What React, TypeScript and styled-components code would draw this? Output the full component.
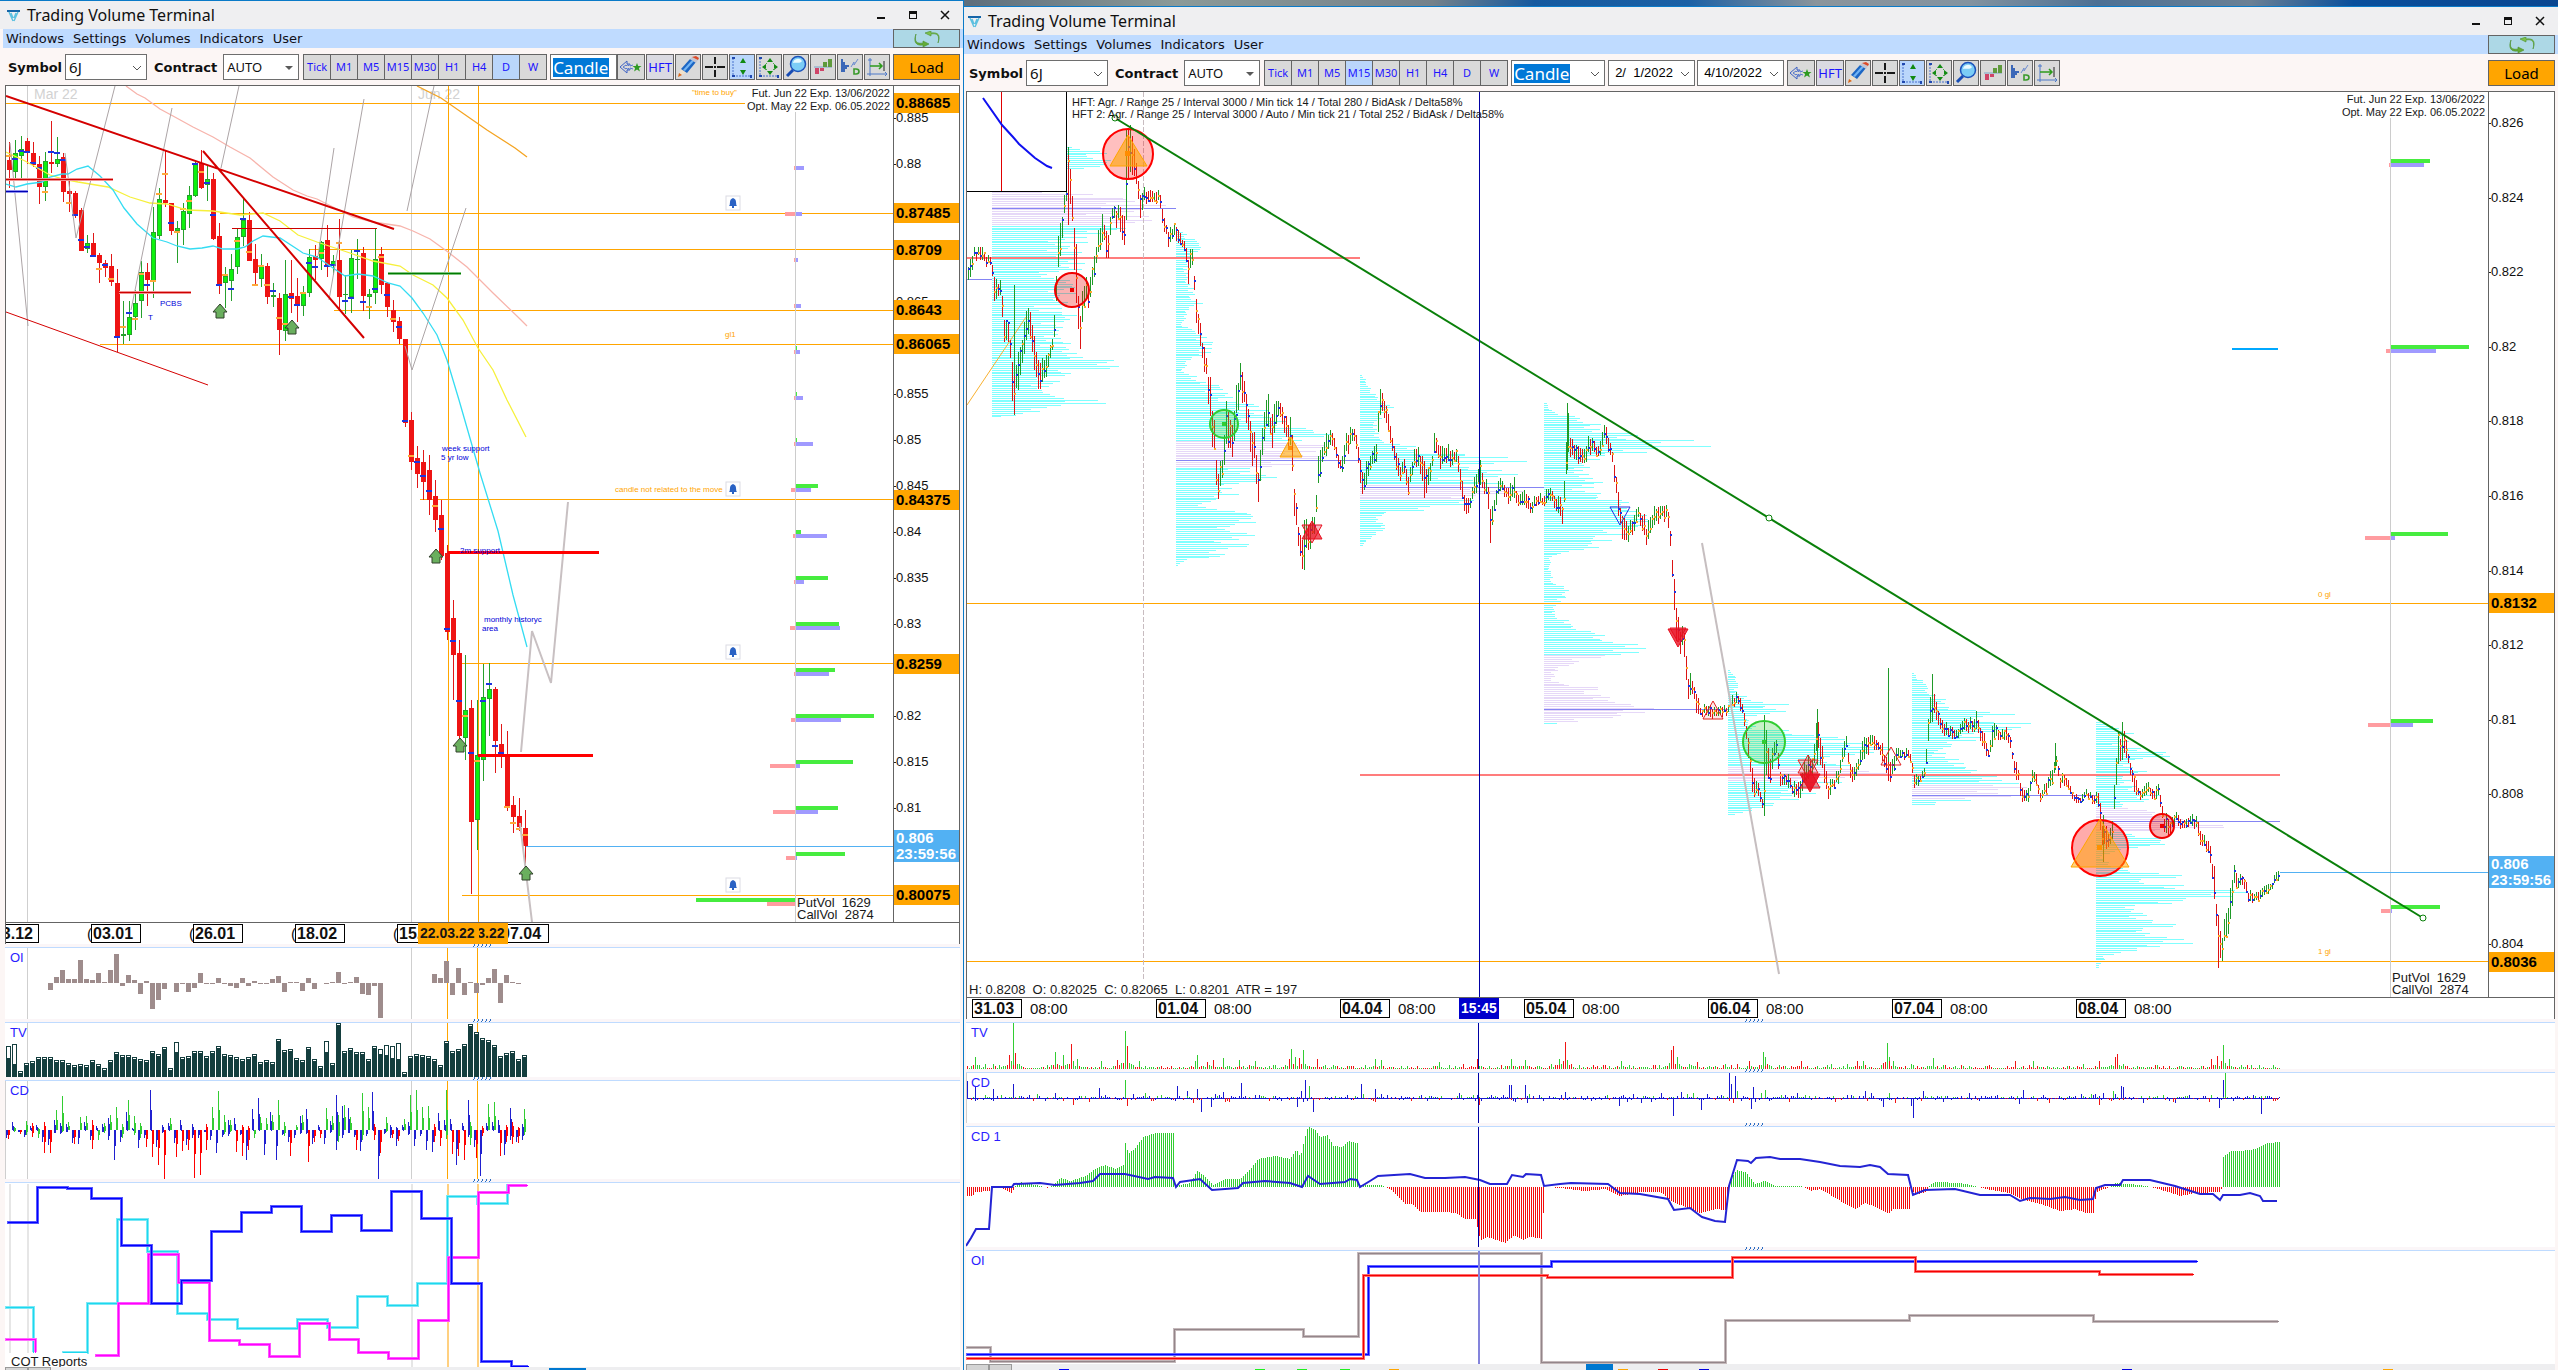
import React from "react";
import styled, { createGlobalStyle } from "styled-components";

const SANS = `"Noto Sans", "Open Sans", sans-serif`;
const WIDE = `"DejaVu Sans", Verdana, sans-serif`;
const CHART = `"Liberation Sans", Arial, sans-serif`;

const BLUE = "#0a7ac8";
const FRAME = "#646464";
const ORANGE = "#ffa500";

/* ------------------------------------------------------------------ */
/* helpers                                                             */
/* ------------------------------------------------------------------ */

type Pt = [number, number];
type Key3 = [number, number, number];

const box = (x: number, y: number, w: number, h: number) =>
  `M${x} ${y}h${w}v${h}h${-w}z`;

function makeRandom(seed: number) {
  let s = seed >>> 0;
  return () => {
    s = (s + 0x6d2b79f5) >>> 0;
    let t = s;
    t = Math.imul(t ^ (t >>> 15), t | 1);
    t ^= t + Math.imul(t ^ (t >>> 7), t | 61);
    return ((t ^ (t >>> 14)) >>> 0) / 4294967296;
  };
}

function lerp(keys: number[][], x: number, col = 1): number {
  if (x <= keys[0][0]) return keys[0][col];
  for (let i = 1; i < keys.length; i++) {
    const a = keys[i - 1];
    const b = keys[i];
    if (x <= b[0]) {
      const span = b[0] - a[0] || 1;
      return a[col] + ((b[col] - a[col]) * (x - a[0])) / span;
    }
  }
  return keys[keys.length - 1][col];
}

const poly = (pts: Pt[]) => pts.map((p) => p.join(",")).join(" ");

/** Step line: [x, y] marks the level that starts at x. */
function stepPath(pts: Pt[], end: number) {
  let d = `M${pts[0][0]} ${pts[0][1]}`;
  pts.slice(1).forEach(([x, y]) => {
    d += `H${x}V${y}`;
  });
  return d + `H${end}`;
}

/* ------------------------------------------------------------------ */
/* styled parts                                                        */
/* ------------------------------------------------------------------ */

const Global = createGlobalStyle`
  * { box-sizing: border-box; }
  body { margin: 0; font-family: ${SANS}; background: #0a4f9c; color: #101010; }
  button, input, select { font: inherit; margin: 0; }
`;

const Desktop = styled.main`
  display: grid;
  grid-template-columns: 964fr 1594fr;
  height: 100vh;
  min-height: 600px;
  overflow: hidden;
  background: linear-gradient(90deg, #5f6f7c 38%, #8c9a98 46%, #75818a 56%, #15599f 60%, #1b60a5 66%, #8b949b 71%, #8393a0 77%, #4d7094 82%, #6b8094 88%, #0a4f9c 92%, #0a4690 100%);
`;

const Frame = styled.section<{ $inset?: boolean }>`
  display: flex;
  flex-direction: column;
  min-width: 0;
  min-height: 0;
  margin-top: ${(p) => (p.$inset ? 6 : 0)}px;
  border-top: 1px solid ${BLUE};
  border-right: ${(p) => (p.$inset ? 0 : 1)}px solid ${BLUE};
  background: #fcf6f5;
`;

const TitleBar = styled.header<{ $inset?: boolean }>`
  display: flex;
  align-items: center;
  flex: 0 0 28px;
  padding: 0 2px 0 ${(p) => (p.$inset ? 3 : 6)}px;
  gap: 6px;
  background: #efeff1;
`;

const Title = styled.h1`
  margin: 0;
  flex: 1;
  font: 400 16px/24px ${SANS};
`;

const WinButtons = styled.div`
  display: flex;
`;

const WinButton = styled.button`
  display: grid;
  place-items: center;
  width: 32px;
  height: 24px;
  padding: 0;
  border: 0;
  background: transparent;
`;

const MenuBar = styled.nav<{ $inset?: boolean }>`
  display: flex;
  flex: 0 0 19px;
  align-items: stretch;
  margin-left: ${(p) => (p.$inset ? 0 : 3)}px;
  padding: 0 3px;
  gap: 9px;
  background: #bfdbff;
`;

const MenuItem = styled.button`
  padding: 0;
  border: 0;
  background: transparent;
  color: #101018;
  font: 400 13px/19px ${WIDE};
`;

const Refresh = styled.button`
  display: grid;
  place-items: center;
  width: 67px;
  margin-left: auto;
  padding: 0;
  border: 1px solid ${FRAME};
  background: #add8e6;
`;

const Toolbar = styled.div<{ $inset?: boolean }>`
  display: flex;
  flex: 0 0 37px;
  align-items: flex-start;
  padding: 6px 3px 0 ${(p) => (p.$inset ? 5 : 8)}px;
`;

const Group = styled.div<{ $gap?: number; $after?: number }>`
  display: flex;
  align-items: center;
  height: 26px;
  gap: ${(p) => p.$gap ?? 0}px;
  margin-right: ${(p) => p.$after ?? 0}px;
`;

const Caption = styled.label`
  font: 700 13px/26px ${WIDE};
  padding-top: 2px;
`;

const Combo = styled.span<{ $w: number }>`
  position: relative;
  display: flex;
  align-items: center;
  width: ${(p) => p.$w}px;
  height: 26px;
  border: 1px solid #6e6e6e;
  background: #fff;
`;

const Pick = styled.select<{ $size: number }>`
  appearance: none;
  width: 100%;
  height: 24px;
  padding: 0 0 0 3px;
  border: 0;
  background: transparent;
  color: #101010;
  font: 400 ${(p) => p.$size}px/22px ${SANS};
`;

const SelectedPick = styled.select`
  appearance: none;
  height: 19px;
  margin-left: 2px;
  padding: 0;
  border: 0;
  background: #0078d7;
  color: #fff;
  font: 400 17px/19px ${SANS};
`;

const DateBox = styled.input`
  width: 100%;
  height: 24px;
  padding: 0 0 0 6px;
  border: 0;
  background: transparent;
  font: 400 13px/24px ${CHART};
`;

const Arrow = styled.svg`
  position: absolute;
  right: 4px;
  top: 9px;
  pointer-events: none;
`;

const ToolButton = styled.button<{ $w?: number; $on?: boolean; $join?: boolean }>`
  display: grid;
  place-items: center;
  width: ${(p) => p.$w ?? 26}px;
  height: 26px;
  margin-left: ${(p) => (p.$join ? -1 : 0)}px;
  padding: 0;
  border: 1px solid ${FRAME};
  background: ${(p) => (p.$on ? "#bad6fb" : "#d9d9d9")};
  color: #1c14ff;
  font: 400 11px/24px ${SANS};
  white-space: nowrap;
`;

const HftButton = styled(ToolButton)`
  font-size: 13px;
  background: #dadae2;
`;

const Load = styled.button`
  width: 67px;
  height: 26px;
  margin-left: auto;
  padding: 0;
  border: 1px solid ${FRAME};
  background: ${ORANGE};
  font: 400 15px/24px ${SANS};
`;

const Body = styled.div<{ $inset?: boolean; $rows: string }>`
  display: grid;
  flex: 1;
  min-height: 0;
  margin: 0 3px 0 ${(p) => (p.$inset ? 2 : 5)}px;
  border-top: 1px solid ${FRAME};
  grid-template-columns: minmax(0, 1fr);
  grid-template-rows: ${(p) => p.$rows};
`;

const ChartRow = styled.div`
  display: grid;
  grid-template-columns: minmax(0, 1fr) 66px;
  min-height: 0;
  border: solid ${FRAME};
  border-width: 0 1px;
  background: #fff;
`;

const Plot = styled.svg`
  display: block;
  width: 100%;
  height: 100%;
  min-height: 0;
  background: #fff;
`;

const Axis = styled.div`
  position: relative;
  border-left: 1px solid ${FRAME};
  overflow: hidden;
  background: #fff;
`;

const Tick = styled.span`
  position: absolute;
  left: 0;
  transform: translateY(-50%);
  padding-left: 2px;
  font: 400 13px/16px ${CHART};
  &::before {
    content: "";
    position: absolute;
    left: 0;
    top: 8px;
    width: 2px;
    height: 1px;
    background: #222;
  }
`;

const Tag = styled.span<{ $live?: boolean }>`
  position: absolute;
  left: 0;
  right: 0;
  transform: translateY(-50%);
  padding: ${(p) => (p.$live ? 0 : 2)}px 0 ${(p) => (p.$live ? 0 : 2)}px 2px;
  background: ${(p) => (p.$live ? "#52b1f3" : ORANGE)};
  color: ${(p) => (p.$live ? "#fff" : "#000")};
  font: 700 15px/16px ${CHART};
  white-space: pre;
`;

const DateAxis = styled.div<{ $start: number }>`
  position: relative;
  display: flex;
  align-items: center;
  overflow: hidden;
  padding-left: ${(p) => p.$start}px;
  border: solid ${FRAME};
  border-width: 1px 1px 0;
  background: #fff;
`;

const DateCell = styled.div<{ $w: number }>`
  position: relative;
  display: flex;
  align-items: center;
  flex: 0 0 ${(p) => p.$w}px;
  gap: 8px;
  font: 400 15px/18px ${CHART};
`;

const DateBoxed = styled.b`
  width: 50px;
  height: 19px;
  padding-left: 1px;
  border: 1px solid #000;
  font: 700 16px/17px ${CHART};
`;

/* first date, scrolled partly out of the left edge */
const DateScrolled = styled(DateBoxed)`
  display: flex;
  justify-content: flex-end;
  width: 33px;
  padding-right: 5px;
  border-left: 0;
  overflow: hidden;
`;

const Paren = styled.span`
  position: absolute;
  left: -4px;
`;

const Cursor = styled.span<{ $left: number; $w: number; $navy?: boolean }>`
  position: absolute;
  top: 0;
  left: ${(p) => p.$left}px;
  width: ${(p) => p.$w}px;
  height: 21px;
  padding-left: 2px;
  overflow: hidden;
  background: ${(p) => (p.$navy ? "#0000cc" : ORANGE)};
  color: ${(p) => (p.$navy ? "#fff" : "#141414")};
  font: 700 14px/20px ${CHART};
  white-space: nowrap;
`;

const Splitter = styled.div<{ $grip: string }>`
  display: flex;
  height: 4px;
  padding-left: ${(p) => p.$grip};
  border-bottom: 1px solid #bfdbff;
  background: #fbf6f8;
`;

const Strip = styled.div`
  position: relative;
  display: flex;
  overflow: hidden;
  background: #eeeef0;
`;

const Pager = styled.button`
  flex: none;
  width: 23px;
  height: 20px;
  padding: 2px 0 0;
  border: 1px solid #9a9a9a;
  background: #d4d4d4;
  line-height: 0;
`;

const Thumb = styled.span<{ $left: string; $w: number; $c?: string; $top?: number }>`
  position: absolute;
  left: ${(p) => p.$left};
  top: ${(p) => p.$top ?? 0}px;
  width: ${(p) => p.$w}px;
  height: 6px;
  background: ${(p) => p.$c ?? "#0078d0"};
`;

const Label = styled.text<{ $size?: number; $fill?: string; $bold?: boolean }>`
  font-family: ${CHART};
  font-size: ${(p) => p.$size ?? 13}px;
  font-weight: ${(p) => (p.$bold ? 700 : 400)};
  fill: ${(p) => p.$fill ?? "#181818"};
  white-space: pre;
`;

/* ------------------------------------------------------------------ */
/* icons                                                               */
/* ------------------------------------------------------------------ */

const Logo = () => (
  <svg width="15" height="15" viewBox="0 0 15 15" aria-hidden="true">
    <path d="M1 3h13" stroke="#1565a8" strokeWidth="2" />
    <path d="M3 4l4 9M12 4L8 13M5 5l2 5M10 5l-2 5" stroke="#5cc0e0" strokeWidth="1.4" fill="none" />
  </svg>
);

const RefreshIcon = () => (
  <svg width="28" height="16" viewBox="0 0 28 16" aria-hidden="true">
    <path d="M3 3c-2 8 1 10 7 9v-2l6 3-6 3v-2C3 15 0 11 3 3z" fill="#63ac38" stroke="#4c8f2c" strokeWidth=".6" />
    <path d="M25 12c2-8-1-10-7-9V5l-6-3 6-2v2c7-1 10 2 7 10z" fill="#7cc24c" stroke="#4c8f2c" strokeWidth=".6" />
  </svg>
);

const Chevron = () => (
  <Arrow width="10" height="8" viewBox="0 0 10 8" aria-hidden="true">
    <path d="M1 2l4 4 4-4" fill="none" stroke="#555" />
  </Arrow>
);

const Caret = () => (
  <Arrow width="10" height="8" viewBox="0 0 10 8" aria-hidden="true">
    <path d="M1 2h8L5 6z" fill="#5a5a5a" />
  </Arrow>
);

const icons: Record<string, React.ReactNode> = {
  "Star signal": (
    <>
      <path d="M8 6L1 12l7 6M8 6v3h3M8 18v-3h3" fill="none" stroke="#3f63c4" />
      <path d="M4 12l3-2v1l2-2v2l2-2v2l3-1M4 12l3 2v-1l2 2v-2l2 2v-2l3 1" fill="none" stroke="#5878cc" />
      <path d="M18 8l1.200 3h3.300l-2.600 2 1 3.500-2.900-2-2.900 2 1-3.500-2.600-2h3.300z" fill="#2f9a22" />
    </>
  ),
  Draw: (
    <>
      <path d="M2 22l3-8 6 3z" fill="#f0e2cc" />
      <path d="M2 22l1-4 3 2z" fill="#d8661c" />
      <path d="M5 14L14 4l6 3-9 11z" fill="#1c66c4" />
      <path d="M7 15L16 5l2 1-9 10z" fill="#72b4f4" />
      <path d="M14 4l2-2 6 3-2 3z" fill="#c4c4d0" />
      <path d="M16 2l4-1 3 2-1 2z" fill="#dc4a28" />
    </>
  ),
  Crosshair: <path d="M2 12h8M14 12h8M12 2v7M12 15v7M11 12h2" stroke="#181818" strokeWidth="2" fill="none" />,
  "Vertical scale": (
    <>
      <path d="M3 3v18h18" fill="none" stroke="#4870cc" strokeDasharray="2 1" />
      <path d="M2 3h3M21 20v3M2 21h3" stroke="#2048b0" strokeWidth="2" />
      <path d="M10 8l3-5 3 5zM10 15l3 5 3-5z" fill="#128a12" />
    </>
  ),
  "Free scale": (
    <>
      <path d="M3 3v18h18" fill="none" stroke="#4870cc" strokeDasharray="2 1" />
      <path d="M2 3h3M21 20v3M2 21h3" stroke="#2048b0" strokeWidth="2" />
      <path d="M10 7l3-4 3 4zM10 16l3 4 3-4zM9 9l-4 3 4 3zM17 9l4 3-4 3z" fill="#128a12" />
      <path d="M10 8l-2 2M16 8l2 2M10 15l-2-2M16 15l2-2" stroke="#4aa44a" fill="none" />
    </>
  ),
  Zoom: (
    <>
      <path d="M9 15l-6 6" stroke="#184cb4" strokeWidth="3" />
      <circle cx="14" cy="9" r="7.500" fill="#7ccdf6" stroke="#1b52bb" strokeWidth="1.500" />
      <path d="M9 8a5 5 0 0 1 9-2c-2 3-6 1-9 2z" fill="#e8faff" />
    </>
  ),
  "Delta bars": (
    <>
      <path d="M3 12h18" stroke="#7aa4c8" />
      <path d="M4 13h4v6h-4zM9 13h4v3h-4z" fill="#cf4468" />
      <path d="M12 7h4v5h-4zM17 4h4v8h-4z" fill="#5f9a3c" />
    </>
  ),
  Profile: (
    <>
      <path d="M3 4h2v3h2v3h4v2H9v2H7v3H3z" fill="#3c68b8" />
      <path d="M13 12l3-5v3l4-6" fill="none" stroke="#6c8cd0" />
      <path d="M16 14h2q3 0 3 2.500t-3 2.500h-2z" fill="none" stroke="#3a9a2c" strokeWidth="1.600" />
    </>
  ),
  "Shift right": (
    <>
      <path d="M5 3v18M2 19h20M3 5h4M20 17l2 2-2 2" fill="none" stroke="#4c78c8" />
      <path d="M5 11h12M14 8l3 3-3 3" fill="none" stroke="#2d9a1c" strokeWidth="1.500" />
      <path d="M19 6v10" stroke="#222" />
    </>
  ),
};

const Icon = ({ name }: { name: string }) => (
  <svg width="24" height="24" viewBox="0 0 24 24" aria-hidden="true">
    {icons[name]}
  </svg>
);

/* ------------------------------------------------------------------ */
/* shared chart marks                                                  */
/* ------------------------------------------------------------------ */

const Bell = ({ y }: { y: number }) => (
  <g>
    <rect x="726" y={y - 7} width="14" height="14" fill="#fff" stroke="#dcdce4" />
    <path d={`M729 ${y + 3}q1-1 1-4q0-3 3-4q3 1 3 4q0 3 1 4zM732 ${y + 3}h2v2h-2z`} fill="#2a62c4" />
  </g>
);

const UpArrow = ({ x, y }: { x: number; y: number }) => (
  <path d={`M${x} ${y - 7}l7 8h-3v6h-8v-6h-3z`} fill="#6aaf5e" stroke="#30402a" />
);

interface Level {
  y: number;
  g: number;
  p: number;
  b: number;
}

const OptionBars = ({ x, rows }: { x: number; rows: Level[] }) => (
  <g>
    {rows.map((r) => (
      <g key={r.y}>
        <rect x={r.g < 0 ? x + r.g : x} y={r.y - 6} width={Math.abs(r.g)} height="4" fill="#46ec3f" />
        <rect x={x - r.p} y={r.y - 2} width={r.p} height="4" fill="#ff9ca0" />
        <rect x={x} y={r.y - 2} width={r.b} height="4" fill="#a09aff" />
      </g>
    ))}
  </g>
);

const Stepped = ({ pts, end, color, halo }: { pts: Pt[]; end: number; color: string; halo: string }) => (
  <g fill="none" shapeRendering="crispEdges">
    <path d={stepPath(pts, end)} stroke={halo} strokeWidth="3" />
    <path d={stepPath(pts, end)} stroke={color} strokeWidth="1" transform="translate(.5 .5)" />
  </g>
);

interface PriceAxisProps {
  top: number;
  height: number;
  ticks: [string, number][];
  tags: [string, number][];
  live: number;
}

const PriceAxis = ({ top, height, ticks, tags, live }: PriceAxisProps) => {
  const at = (y: number) => ({ top: `${((y - top) / height) * 100}%` });
  return (
    <Axis>
      {ticks.map(([t, y]) => (
        <Tick key={t} style={at(y)}>{t}</Tick>
      ))}
      {tags.map(([t, y]) => (
        <Tag key={t} style={at(y)}>{t}</Tag>
      ))}
      <Tag $live style={at(live)}>{"0.806\n23:59:56"}</Tag>
    </Axis>
  );
};

const Grip = ({ at }: { at: string }) => (
  <Splitter $grip={at}>
    <svg width="18" height="3" aria-hidden="true">
      {[0, 4, 8, 12, 16].map((x) => (
        <path key={x} d={`M${x} 2h1v1h-1zM${x + 1} 0h1v2h-1z`} fill="#2a6ec4" />
      ))}
    </svg>
  </Splitter>
);

/* ------------------------------------------------------------------ */
/* daily chart data                                                    */
/* ------------------------------------------------------------------ */

/** high, body top, body bottom, low, up?, mark y, mark colour */
type Candle = [number, number, number, number, 0 | 1, number, "o" | "b"];

const candles: Candle[] = [
  [142, 160, 170, 188, 0, 155, "o"], [140, 153, 172, 180, 1, 158, "b"], [136, 149, 156, 178, 1, 150, "b"],
  [138, 141, 153, 164, 0, 151, "b"], [142, 153, 165, 167, 0, 162, "b"], [156, 164, 187, 204, 0, 167, "b"],
  [152, 161, 187, 201, 1, 191, "o"], [121, 162, 164, 173, 0, 151, "b"], [137, 159, 164, 167, 1, 152, "b"],
  [153, 157, 192, 202, 0, 159, "b"], [180, 191, 194, 212, 0, 202, "o"], [191, 193, 214, 218, 0, 214, "b"],
  [208, 210, 251, 251, 0, 239, "b"], [235, 243, 249, 253, 1, 246, "b"], [233, 243, 255, 256, 0, 255, "b"],
  [253, 255, 263, 283, 0, 268, "o"], [260, 263, 268, 277, 0, 264, "b"], [254, 266, 282, 286, 0, 278, "o"],
  [269, 283, 336, 352, 0, 336, "b"], [301, 334, 336, 344, 1, 326, "o"], [301, 317, 335, 341, 1, 312, "b"],
  [290, 303, 317, 330, 1, 318, "o"], [261, 272, 301, 318, 1, 273, "o"], [263, 272, 280, 306, 0, 284, "b"],
  [207, 232, 282, 298, 1, 280, "o"], [188, 199, 236, 239, 1, 193, "o"], [150, 200, 203, 207, 0, 173, "o"],
  [203, 203, 231, 235, 0, 222, "b"], [221, 228, 231, 263, 1, 231, "o"], [203, 211, 230, 245, 1, 208, "o"],
  [186, 195, 214, 228, 1, 200, "o"], [161, 163, 196, 197, 1, 163, "b"], [150, 163, 188, 189, 0, 171, "o"],
  [166, 179, 185, 201, 1, 182, "b"], [173, 179, 239, 240, 0, 214, "b"], [223, 236, 286, 294, 0, 284, "b"],
  [267, 276, 283, 308, 1, 274, "o"], [254, 269, 281, 301, 1, 288, "b"], [228, 237, 267, 274, 1, 240, "o"],
  [199, 220, 237, 246, 1, 218, "b"], [212, 220, 261, 261, 0, 251, "o"], [244, 259, 273, 286, 0, 284, "o"],
  [254, 266, 279, 287, 1, 265, "o"], [263, 266, 297, 304, 0, 284, "o"], [283, 295, 297, 307, 1, 290, "b"],
  [293, 298, 330, 355, 0, 317, "o"], [260, 294, 331, 341, 1, 323, "o"], [260, 293, 299, 313, 0, 296, "b"],
  [278, 296, 304, 322, 0, 304, "b"], [286, 293, 306, 316, 1, 292, "o"], [249, 257, 293, 297, 1, 262, "b"],
  [245, 256, 260, 280, 0, 266, "b"], [241, 242, 259, 270, 1, 252, "o"], [225, 240, 265, 277, 0, 265, "b"],
  [255, 261, 266, 275, 1, 264, "b"], [219, 260, 297, 309, 0, 242, "o"], [275, 294, 295, 314, 1, 300, "b"],
  [250, 258, 297, 313, 1, 297, "b"], [239, 259, 260, 279, 1, 250, "b"], [247, 253, 296, 311, 0, 301, "b"],
  [289, 294, 297, 319, 1, 306, "o"], [228, 259, 293, 304, 1, 288, "b"], [247, 254, 285, 294, 0, 256, "o"],
  [282, 283, 307, 317, 0, 294, "b"], [300, 310, 322, 332, 0, 318, "o"], [317, 321, 339, 344, 0, 326, "b"],
  [339, 339, 423, 427, 0, 420, "b"], [412, 420, 462, 470, 0, 455, "o"], [446, 458, 474, 488, 0, 461, "b"],
  [450, 462, 482, 500, 0, 475, "b"], [455, 470, 500, 515, 0, 490, "b"], [480, 496, 520, 532, 0, 505, "o"],
  [500, 515, 556, 560, 0, 528, "b"], [545, 553, 632, 640, 0, 628, "b"], [600, 618, 655, 700, 0, 640, "b"],
  [640, 653, 736, 745, 0, 700, "b"], [655, 710, 738, 760, 1, 715, "o"], [700, 708, 822, 894, 0, 752, "b"],
  [700, 755, 820, 850, 1, 760, "o"], [664, 697, 760, 781, 1, 700, "b"], [663, 689, 699, 736, 1, 683, "b"],
  [687, 689, 741, 773, 0, 745, "b"], [724, 744, 753, 768, 0, 752, "b"], [731, 757, 806, 811, 0, 806, "o"],
  [796, 805, 817, 833, 0, 822, "o"], [798, 816, 827, 831, 0, 828, "o"], [810, 828, 846, 870, 0, 834, "o"],
];

const third = (pts: Pt[]): Pt[] => pts.map(([x, y]) => [Math.round(x / 3), Math.round(y / 3)]);

const slowAverage: Pt[] = [
  ...third([[18, 455], [75, 482], [150, 525], [190, 538], [235, 546], [325, 560], [390, 592], [450, 610], [500, 613], [560, 630], [640, 632], [720, 645], [790, 640], [840, 664], [895, 705], [950, 725], [1040, 756], [1120, 783], [1200, 799], [1240, 825], [1300, 855], [1340, 895], [1390, 960], [1435, 1045], [1480, 1110]]),
  [507, 400], [526, 437],
];
const fastAverage: Pt[] = [
  ...third([[18, 553], [48, 561], [80, 552], [125, 545], [150, 532], [185, 522], [205, 522], [230, 507], [265, 497], [300, 527], [340, 570], [372, 625], [410, 673], [460, 713], [500, 725], [530, 738], [570, 748], [605, 745], [640, 739], [670, 747], [710, 747], [735, 740], [760, 722], [790, 708], [840, 714], [890, 748], [910, 760], [950, 772], [1000, 803], [1035, 829], [1075, 822], [1120, 828], [1165, 848], [1200, 858], [1235, 893], [1270, 940], [1310, 1005], [1340, 1080], [1378, 1200]]),
  [480, 473], [498, 531], [513, 595], [527, 647],
];
const longAverage: Pt[] = [
  ...third([[378, 258], [410, 282], [435, 295], [480, 327], [520, 348], [580, 380], [640, 410], [690, 440], [750, 475], [820, 530], [880, 570], [920, 588], [950, 597], [1000, 622], [1060, 650], [1120, 665], [1200, 677], [1240, 692], [1290, 718], [1345, 755], [1400, 800], [1480, 880], [1560, 958]]),
  [527, 326],
];

const leftLevels: Level[] = [
  [168, 0, 2, 8], [214, 0, 11, 6], [260, 0, 2, 2], [306, 0, 2, 5], [352, 1, 2, 4], [398, 1, 2, 7],
  [444, 1, 2, 17], [486, 22, 5, 15], [530, 5, 3, 31], [572, 32, 2, 8], [615, 43, 6, 44],
].map(([y, g, p, b]) => ({ y, g, p, b }));

/* strikes below 0.85 follow the same spacing as the price scale */
const lowerLevels: Level[] = [
  [490, 22, 5, 15], [536, 5, 3, 31], [582, 32, 2, 8], [628, 43, 6, 44], [674, 39, 2, 33],
  [720, 78, 5, 45], [766, 57, 26, 4], [812, 42, 23, 22], [858, 49, 10, 1], [904, -100, 29, 0],
].map(([y, g, p, b]) => ({ y, g, p, b }));
const allLevels = [...leftLevels.slice(0, 7), ...lowerLevels];

const leftLines: [number, number][] = [
  [103, 6], [213, 220], [249, 310], [310, 334], [344, 100], [499, 420], [663, 462], [895, 462],
];

function DailyPlot() {
  const cx = (i: number) => 9 + i * 6;
  const pick = (up: 0 | 1, f: (c: Candle, i: number) => string) =>
    candles.map((c, i) => (c[4] === up ? f(c, i) : "")).join("");
  const wick = (c: Candle, i: number) => box(cx(i), c[0], 1, c[3] - c[0]);
  const bodyPath = (c: Candle, i: number) => box(cx(i) - 2, c[1], 5, Math.max(1, c[2] - c[1]));
  const corePath = (c: Candle, i: number) => box(cx(i) - 1, c[1] + 1, 3, Math.max(0, c[2] - c[1] - 2));
  const marks = (k: string) =>
    candles.map((c, i) => (c[6] === k ? box(cx(i) - 3, c[5], 6, 2) : "")).join("");
  return (
    <Plot viewBox="6 86 887 836" preserveAspectRatio="none">
      <Label x="34" y="99" $size={14} $fill="#d2d2d2">Mar 22</Label>
      <Label x="418" y="99" $size={14} $fill="#d2d2d2">Jun 22</Label>
      <path d={box(27, 86, 1, 836) + box(411, 86, 1, 836)} fill="#cfcfcf" />
      <path d={leftLines.map(([y, x]) => box(x, y, 893 - x, 1)).join("")} fill={ORANGE} />
      <path d={box(448, 86, 1, 836) + box(478, 86, 1, 836)} fill={ORANGE} />
      <OptionBars x={796} rows={allLevels} />
      <path d={box(745, 90, 148, 22)} fill="#fff" />
      <path d={box(795, 112, 1, 810)} fill="#cccccc" />
      <path d={pick(1, wick)} fill="#26a02c" />
      <path d={pick(0, wick)} fill="#e01818" />
      <path d={pick(1, bodyPath)} fill="#26a02c" />
      <path d={pick(1, corePath)} fill="#0df20d" />
      <path d={pick(0, bodyPath)} fill="#ee1414" />
      <path d={marks("o")} fill="#ffa93a" />
      <path d={marks("b")} fill="#1c34e0" />
      <g fill="none" strokeWidth="1.3">
        <polyline points={poly(slowAverage)} stroke="#f6f03c" />
        <polyline points={poly(fastAverage)} stroke="#34dcf2" />
        <polyline points={poly(longAverage)} stroke="#f7b4ac" />
        <polyline points="417,86 441,98 487,130 515,148 527,157" stroke="#f4a422" />
      </g>
      <g fill="none" stroke="#aca4a6">
        <path d="M115 86L76 238L65 153M172 108L131 310M239 86L221 168M334 148L318 256M364 99L329 300M434 86L407 211M466 208L412 370L405 346M10 143L28 326" />
      </g>
      <g fill="none" stroke="#c8c0c2" strokeWidth="2">
        <path d="M521 752L532 631L551 683L568 502M520 823L532 922" />
      </g>
      <g fill="none" stroke="#d40000">
        <path d="M6 96L394 229M203 151L364 338" strokeWidth="2" />
        <path d="M6 312L208 385" />
      </g>
      <path d={box(6, 178, 107, 3) + box(119, 291, 72, 3)} fill="#f29090" />
      <path d={box(6, 179, 107, 1) + box(119, 292, 72, 1) + box(232, 228, 145, 1)} fill="#cc0000" />
      <path d={box(388, 272, 73, 3)} fill="#7fc47f" />
      <path d={box(388, 273, 73, 1)} fill="#007a00" />
      <path d={box(6, 190, 22, 3)} fill="#9090f0" />
      <path d={box(6, 191, 22, 1)} fill="#0000b4" />
      <path d={box(448, 551, 151, 3) + box(478, 754, 115, 3)} fill="#ff0000" />
      <path d={box(526, 846, 367, 1)} fill="#52b1f3" />
      {[[220, 311], [292, 327], [436, 556], [460, 745], [526, 873]].map(([x, y]) => (
        <UpArrow key={x} x={x} y={y} />
      ))}
      <Label x="160" y="306" $size={8} $fill="#0000d8">PCBS</Label>
      <Label x="148" y="320" $size={8} $fill="#0000d8">T</Label>
      <Label x="442" y="451" $size={8} $fill="#0000d8">week support</Label>
      <Label x="441" y="460" $size={8} $fill="#0000d8">5 yr low</Label>
      <Label x="460" y="553" $size={8} $fill="#0000d8">2m support</Label>
      <Label x="484" y="622" $size={8} $fill="#0000d8">monthly historyc</Label>
      <Label x="482" y="631" $size={8} $fill="#0000d8">area</Label>
      <Label x="692" y="95" $size={8} $fill={ORANGE}>"time to buy"</Label>
      <Label x="725" y="337" $size={8} $fill={ORANGE}>gl1</Label>
      <Label x="615" y="492" $size={8} $fill={ORANGE}>candle not related to the move</Label>
      <Bell y={203} />
      <Bell y={489} />
      <Bell y={652} />
      <Bell y={885} />
      <Label x="890" y="97" textAnchor="end" $size={11}>Fut. Jun 22 Exp. 13/06/2022</Label>
      <Label x="890" y="110" textAnchor="end" $size={11}>Opt. May 22 Exp. 06.05.2022</Label>
      <Label x="797" y="907">PutVol  1629</Label>
      <Label x="797" y="919">CallVol  2874</Label>
    </Plot>
  );
}

const oiDaily: Record<number, number[]> = {
  7: [-7, 6, 13, 4, 4, 23, 4, 3, 10, 1, 13, 29, -3, 8, 3, -11, 2, -26, -17, -6],
  28: [-9, -1, -9, -5, 10, -1, -1, 5, -1, -3, -5, 5, -3, 2, -1, -1, 4, 7, -9, 1, 1, -8, 5, -6],
  53: [-1, 1, 11, -1, 1, 6, -11, -12, -3, -35],
  71: [9, 5, 22, -12, 15, -12, 1, -10, -2, 5, 14, -20, 8, 1, -1],
};

const tvDaily = [
  31, 33, 6, 14, 16, 20, 20, 20, 17, 17, 14, 12, 13, 12, 17, 13, 9, 17, 25, 22, 22, 20, 18, 17, 26, 23, 30, 9, 35, 20,
  21, 26, 26, 21, 26, 31, 23, 22, 20, 18, 20, 23, 15, 17, 15, 38, 27, 28, 19, 17, 30, 18, 11, 36, 14, 54, 26, 29, 25,
  25, 18, 31, 28, 32, 31, 34, 5, 21, 23, 22, 21, 18, 12, 36, 26, 28, 33, 53, 45, 39, 37, 32, 21, 24, 26, 18, 22,
];
const tvHollow: Record<number, number> = { 0: 19, 1: 13, 28: 25, 53: 25, 62: 23, 63: 22, 64: 19, 65: 18 };

/** blue up, blue down, delta up, delta down; a trailing 1 keeps the delta green */
const cdDaily: number[][] = [
  [0, 8, 0, 9], [8, 0, 3, 2], [0, 2, 0, 4], [0, 7, 9, 5], [4, 0, 7, 7], [5, 0, 2, 8, 1], [0, 12, 8, 23], [0, 15, 0, 23],
  [10, 3, 20, 0], [7, 4, 34, 2], [6, 2, 8, 0], [0, 13, 0, 14], [0, 14, 13, 0], [8, 0, 14, 0], [0, 10, 10, 19],
  [4, 0, 0, 10, 1], [6, 2, 7, 3], [12, 10, 15, 0], [0, 30, 23, 0], [0, 12, 6, 8, 1], [18, 0, 30, 0], [2, 0, 14, 5],
  [0, 18, 7, 8, 1], [0, 8, 0, 17], [40, 0, 0, 27], [0, 17, 0, 35], [5, 3, 0, 49], [7, 0, 12, 0], [0, 13, 0, 27],
  [10, 0, 0, 21], [0, 15, 0, 20], [6, 8, 0, 48], [0, 8, 0, 45], [0, 2, 6, 20], [0, 10, 23, 0], [0, 23, 39, 0],
  [0, 7, 15, 4], [10, 6, 10, 2], [12, 0, 0, 22], [0, 5, 5, 26], [0, 30, 4, 20], [21, 0, 0, 8, 1], [32, 0, 13, 0],
  [0, 25, 12, 0], [18, 0, 15, 0], [0, 30, 30, 0], [0, 5, 8, 6, 0], [0, 12, 0, 26], [0, 8, 5, 0], [14, 4, 15, 0],
  [21, 4, 0, 32], [0, 14, 0, 12], [5, 0, 0, 8], [0, 14, 22, 0], [9, 3, 14, 0], [35, 20, 15, 12], [24, 8, 25, 0],
  [22, 3, 13, 0], [0, 7, 0, 20], [0, 21, 37, 10], [0, 6, 23, 0], [38, 0, 6, 10], [0, 49, 0, 23], [1, 4, 13, 2],
  [5, 8, 0, 8], [3, 16, 0, 11], [5, 0, 11, 0], [8, 5, 35, 0], [0, 16, 40, 0], [0, 6, 23, 0], [0, 20, 24, 0],
  [0, 22, 6, 12], [17, 0, 0, 16], [10, 0, 40, 9], [11, 0, 0, 24], [0, 35, 0, 26], [7, 0, 0, 30], [30, 7, 8, 15, 1],
  [0, 17, 0, 28], [0, 46, 4, 6], [7, 0, 26, 0], [8, 0, 28, 0], [10, 3, 0, 26], [0, 25, 5, 12], [22, 10, 8, 14],
  [0, 12, 3, 13], [6, 10, 21, 5],
];

const PanelMarks = ({ y, h }: { y: number; h: number }) => (
  <>
    <path d={box(27, y, 1, h) + box(411, y, 1, h)} fill="#cfcfcf" />
    <path d={box(447, y, 1, h) + box(477, y, 1, h)} fill={ORANGE} />
  </>
);

function DailyOi() {
  const d = Object.entries(oiDaily)
    .map(([start, list]) =>
      list.map((v, k) => box(6 + (Number(start) + k) * 6, v > 0 ? 983 - v : 983, 5, Math.abs(v))).join(""))
    .join("");
  return (
    <Plot viewBox="5 948 955 71" preserveAspectRatio="none">
      <PanelMarks y={948} h={71} />
      <path d={d} fill="#9e8c8c" />
      <Label x="10" y="962" $fill="#2a1cff">OI</Label>
    </Plot>
  );
}

function DailyTv() {
  const outline = tvDaily.map((h, i) => box(6 + i * 6, 1077 - h, 5, h)).join("");
  const gaps = tvDaily
    .map((h, i) => box(7 + i * 6, 1078 - h, 3, Math.max(1, (tvHollow[i] ? h - tvHollow[i] : 2) - 1)))
    .join("");
  return (
    <Plot viewBox="5 1023 955 54" preserveAspectRatio="none">
      <PanelMarks y={1023} h={54} />
      <path d={outline} fill="#143e3e" />
      <path d={gaps} fill="#fff" />
      <Label x="10" y="1037" $fill="#2a1cff">TV</Label>
    </Plot>
  );
}

function DailyCd() {
  let blue = "";
  let up = "";
  let down = "";
  cdDaily.forEach(([bu, bd, cu, cd, force], i) => {
    const x = 6 + i * 6;
    blue += box(x, 1130 - bu, 1, bu + bd) + box(x + 1, 1130 - Math.round(bu / 2), 1, Math.round((bu + bd) / 2) + 1);
    const bar = box(x + 3, 1130 - Math.round(cu / 2), 1, Math.round((cu + cd) / 2)) + box(x + 2, 1130 - cu, 1, cu + cd);
    if (cu > cd || force) up += bar;
    else down += bar;
  });
  return (
    <Plot viewBox="5 1081 955 98" preserveAspectRatio="none">
      <path d={box(5, 1081, 1, 98)} fill="#cfcfcf" />
      <PanelMarks y={1081} h={98} />
      <path d={up} fill="#32cd32" />
      <path d={down} fill="#ff0000" />
      <path d={blue} fill="#2020d0" />
      <Label x="10" y="1095" $fill="#2a1cff">CD</Label>
    </Plot>
  );
}

function CotReports() {
  return (
    <Plot viewBox="5 1183 955 184" preserveAspectRatio="none">
      <path d={box(9, 1184, 2, 183) + box(27, 1184, 2, 183) + box(411, 1184, 2, 183)} fill="#e6e6e6" />
      <path d={box(447, 1184, 2, 183) + box(477, 1184, 2, 183)} fill="#ffd080" />
      <Stepped color="#1cd8ee" halo="#7ce8f6" end={33} pts={[[5, 1307], [33, 1352]]} />
      <Stepped
        color="#1cd8ee"
        halo="#7ce8f6"
        end={526}
        pts={[[62, 1352], [87, 1303], [117, 1219], [147, 1251], [177, 1313], [207, 1319], [237, 1328], [297, 1319], [327, 1327], [357, 1296], [387, 1305], [417, 1283], [447, 1196], [477, 1203], [507, 1185]]}
      />
      <Stepped color="#ff00ff" halo="#ff6cff" end={35} pts={[[5, 1339], [35, 1352]]} />
      <Stepped
        color="#ff00ff"
        halo="#ff50ff"
        end={527}
        pts={[[95, 1355], [118, 1303], [148, 1254], [178, 1282], [209, 1340], [239, 1344], [269, 1356], [299, 1323], [329, 1339], [358, 1352], [388, 1358], [418, 1320], [448, 1257], [478, 1192], [508, 1185]]}
      />
      <Stepped
        color="#0000ff"
        halo="#5858ff"
        end={528}
        pts={[[7, 1222], [37, 1187], [67, 1188], [91, 1198], [121, 1245], [151, 1303], [181, 1280], [211, 1231], [241, 1212], [271, 1206], [301, 1231], [331, 1215], [361, 1230], [391, 1191], [421, 1218], [451, 1283], [481, 1361], [511, 1366]]}
      />
      <path d={box(9, 1353, 78, 14)} fill="#fff" />
      <Label x="11" y="1366">COT Reports</Label>
    </Plot>
  );
}

/* ------------------------------------------------------------------ */
/* 15 minute chart data                                                */
/* ------------------------------------------------------------------ */

/** x, middle, half range */
const track: Key3[] = [
  [968, 272, 10], [975, 252, 10], [985, 257, 8], [991, 262, 5], [994, 290, 15], [1000, 290, 12], [1004, 328, 15],
  [1009, 330, 15], [1012, 385, 22], [1015, 385, 25], [1021, 350, 20], [1027, 320, 15], [1032, 335, 20],
  [1037, 380, 18], [1043, 375, 15], [1050, 355, 12], [1055, 320, 12], [1057, 260, 18], [1062, 225, 20],
  [1065, 190, 12], [1068, 175, 30], [1072, 210, 20], [1076, 280, 30], [1079, 330, 25], [1083, 300, 20],
  [1090, 285, 18], [1096, 255, 12], [1102, 225, 15], [1107, 250, 15], [1112, 215, 12], [1118, 215, 15],
  [1124, 230, 20], [1127, 165, 35], [1130, 150, 30], [1135, 160, 15], [1140, 200, 15], [1146, 198, 8],
  [1153, 197, 6], [1159, 198, 8], [1164, 225, 8], [1168, 240, 8], [1174, 230, 8], [1178, 240, 10],
  [1184, 245, 8], [1188, 265, 15], [1192, 255, 12], [1195, 300, 12], [1200, 335, 15], [1207, 375, 18],
  [1213, 430, 25], [1217, 480, 20], [1222, 470, 15], [1226, 430, 25], [1232, 445, 20], [1236, 405, 20],
  [1240, 380, 20], [1245, 400, 15], [1250, 440, 20], [1254, 450, 25], [1258, 485, 20], [1262, 440, 15],
  [1267, 415, 20], [1273, 425, 20], [1277, 405, 10], [1283, 415, 12], [1287, 425, 12], [1291, 440, 20],
  [1294, 490, 20], [1298, 530, 15], [1302, 555, 20], [1305, 535, 20], [1310, 535, 15], [1315, 525, 12],
  [1318, 480, 20], [1322, 455, 12], [1327, 445, 12], [1331, 435, 10], [1336, 455, 8], [1341, 465, 8],
  [1346, 445, 12], [1350, 435, 10], [1356, 438, 10], [1361, 475, 18], [1365, 478, 12], [1370, 460, 12],
  [1376, 455, 12], [1379, 395, 20], [1381, 400, 15], [1387, 420, 12], [1393, 450, 10], [1398, 470, 10],
  [1404, 468, 10], [1408, 485, 12], [1413, 460, 12], [1418, 455, 10], [1424, 485, 20], [1430, 472, 12],
  [1434, 445, 12], [1440, 455, 12], [1446, 455, 10], [1452, 455, 12], [1457, 455, 8], [1461, 485, 18],
  [1465, 505, 10], [1471, 502, 10], [1476, 480, 12], [1480, 475, 15], [1486, 490, 10], [1490, 520, 25],
  [1493, 515, 12], [1497, 490, 10], [1503, 487, 8], [1508, 500, 10], [1513, 485, 12], [1518, 500, 8],
  [1524, 500, 8], [1530, 505, 8], [1537, 500, 6], [1544, 500, 8], [1550, 495, 8], [1556, 505, 8],
  [1562, 510, 12], [1565, 480, 15], [1567, 440, 30], [1571, 448, 10], [1582, 455, 10], [1590, 445, 10],
  [1598, 450, 8], [1605, 433, 10], [1610, 450, 10], [1615, 475, 12], [1621, 520, 18], [1626, 535, 12],
  [1633, 525, 12], [1639, 512, 10], [1646, 535, 12], [1653, 518, 10], [1660, 512, 8], [1667, 515, 10],
  [1671, 545, 15], [1674, 605, 22], [1680, 640, 18], [1684, 645, 16], [1687, 680, 15], [1692, 690, 10],
  [1697, 705, 12], [1702, 712, 6], [1710, 711, 8], [1718, 712, 6], [1726, 710, 5], [1730, 703, 6],
  [1737, 700, 8], [1742, 710, 8], [1748, 745, 12], [1753, 785, 15], [1758, 793, 8], [1763, 808, 6],
  [1765, 760, 30], [1770, 770, 15], [1775, 745, 12], [1780, 775, 10], [1786, 780, 8], [1793, 790, 8],
  [1800, 790, 10], [1806, 770, 15], [1811, 765, 10], [1817, 735, 25], [1822, 760, 15], [1828, 788, 10],
  [1833, 785, 8], [1838, 775, 8], [1843, 750, 10], [1846, 740, 8], [1850, 775, 10], [1856, 770, 8],
  [1862, 750, 12], [1866, 745, 12], [1871, 740, 8], [1877, 745, 6], [1882, 755, 12], [1887, 765, 12],
  [1893, 770, 16], [1895, 755, 8], [1902, 752, 5], [1909, 755, 6], [1914, 778, 10], [1920, 780, 6],
  [1925, 770, 8], [1928, 725, 15], [1931, 705, 18], [1935, 710, 15], [1940, 725, 8], [1947, 730, 8],
  [1955, 735, 5], [1963, 725, 8], [1972, 725, 8], [1977, 720, 12], [1983, 745, 12], [1988, 755, 8],
  [1993, 730, 12], [2000, 735, 6], [2005, 730, 8], [2010, 745, 8], [2016, 770, 10], [2022, 795, 8],
  [2028, 795, 8], [2033, 770, 8], [2040, 795, 6], [2045, 790, 8], [2051, 780, 10], [2055, 760, 8],
  [2060, 780, 6], [2066, 780, 8], [2072, 795, 5], [2080, 800, 4], [2086, 793, 4], [2092, 798, 5],
  [2097, 798, 6], [2100, 812, 18], [2103, 842, 18], [2108, 835, 10], [2112, 830, 12], [2115, 785, 20],
  [2118, 745, 22], [2122, 738, 16], [2128, 757, 8], [2134, 785, 12], [2140, 795, 6], [2147, 787, 6],
  [2153, 797, 6], [2159, 792, 8], [2164, 825, 12], [2170, 825, 10], [2176, 818, 8], [2183, 825, 6],
  [2190, 822, 6], [2196, 822, 8], [2200, 838, 12], [2206, 845, 6], [2211, 855, 10], [2214, 890, 20],
  [2217, 920, 20], [2219, 940, 26], [2222, 945, 15], [2226, 925, 18], [2230, 905, 18], [2233, 880, 15],
  [2238, 882, 8], [2243, 877, 6], [2248, 898, 8], [2253, 900, 6], [2260, 895, 6], [2267, 890, 6],
  [2272, 885, 6], [2276, 875, 6], [2279, 873, 8],
];

const spikes: [number, number, number, 0 | 1][] = [
  [1014, 285, 415, 1], [1126, 130, 220, 1], [1128, 128, 180, 0], [1068, 155, 225, 0], [1567, 403, 470, 1],
  [1764, 715, 816, 1], [1817, 709, 765, 1], [1888, 668, 778, 1], [1932, 674, 722, 1], [2055, 743, 770, 1],
  [2103, 815, 862, 1], [2122, 722, 760, 1], [2218, 920, 968, 0], [1304, 520, 570, 1],
];

function buildIntraday() {
  const rnd = makeRandom(77);
  const out = { up: "", down: "", o: "", b: "" };
  let last = 272;
  for (let x = 968; x <= 2279; x += 2) {
    const half = lerp(track, x, 2);
    const mid = lerp(track, x, 1) + (rnd() - 0.5) * half * 0.7;
    const top = Math.round(mid - half * (0.4 + rnd() * 0.6));
    const bottom = Math.round(mid + half * (0.4 + rnd() * 0.6));
    const key = mid > last ? "down" : "up";
    out[key] += box(x, top, 1, Math.max(3, bottom - top));
    const mark = rnd() > 0.5 ? "o" : "b";
    out[mark] += box(x, Math.round(mid + (rnd() - 0.5) * half), 2, 2);
    last = mid;
  }
  spikes.forEach(([x, t, b, up]) => {
    out[up ? "up" : "down"] += box(x, t, 1, b - t);
  });
  return out;
}
const intraday = buildIntraday();

interface Profile {
  x: number;
  rows: number[][];
  area: [number, number];
  poc: number;
  to: number;
}

const profiles: Profile[] = [
  { x: 992, area: [192, 224], poc: 208, to: 1176, rows: [[192, 70], [195, 110], [202, 150], [208, 165], [214, 120], [219, 165], [228, 120], [240, 90], [252, 85], [262, 100], [275, 60], [285, 90], [300, 65], [315, 75], [330, 60], [345, 75], [353, 95], [361, 118], [369, 110], [378, 60], [390, 70], [403, 112], [406, 55], [412, 40], [417, 4]] },
  { x: 1067, area: [0, 1], poc: 0, to: 0, rows: [[147, 6], [152, 38], [156, 24], [163, 52], [168, 14]] },
  { x: 1176, area: [441, 466], poc: 460, to: 1360, rows: [[232, 8], [240, 18], [248, 24], [258, 12], [280, 12], [290, 18], [303, 24], [312, 10], [325, 8], [335, 28], [345, 34], [352, 38], [360, 12], [372, 6], [378, 25], [388, 45], [396, 50], [404, 82], [412, 80], [420, 105], [430, 135], [437, 150], [441, 160], [455, 135], [466, 110], [470, 80], [478, 95], [485, 60], [497, 55], [507, 30], [512, 80], [517, 75], [522, 97], [528, 40], [534, 72], [540, 55], [545, 70], [552, 50], [557, 40], [560, 10], [566, 1]] },
  { x: 1360, area: [484, 498], poc: 487, to: 1544, rows: [[375, 2], [388, 12], [395, 15], [401, 20], [406, 42], [412, 25], [425, 15], [440, 24], [450, 70], [455, 110], [459, 158], [465, 120], [472, 150], [480, 115], [484, 165], [492, 150], [502, 105], [508, 75], [513, 22], [520, 15], [526, 26], [533, 18], [540, 8], [547, 2]] },
  { x: 1544, area: [655, 722], poc: 709, to: 1728, rows: [[403, 4], [412, 8], [418, 40], [428, 60], [436, 90], [443, 180], [449, 140], [455, 60], [468, 40], [480, 60], [490, 40], [505, 90], [515, 110], [525, 90], [540, 70], [550, 40], [556, 8], [570, 6], [580, 10], [590, 22], [597, 20], [605, 12], [615, 12], [622, 30], [632, 50], [645, 90], [653, 105], [656, 60], [662, 30], [670, 12], [680, 8], [688, 52], [696, 60], [704, 105], [712, 122], [718, 60], [723, 10]] },
  { x: 1728, area: [767, 780], poc: 774, to: 1912, rows: [[670, 2], [680, 10], [690, 8], [698, 20], [704, 56], [710, 58], [716, 18], [728, 40], [737, 110], [745, 150], [755, 140], [765, 120], [775, 155], [782, 100], [790, 80], [796, 85], [802, 55], [808, 40], [815, 3]] },
  { x: 1912, area: [785, 798], poc: 795, to: 2096, rows: [[673, 2], [682, 12], [688, 14], [698, 30], [706, 30], [714, 100], [720, 85], [726, 130], [735, 70], [745, 45], [755, 30], [765, 70], [775, 90], [782, 100], [792, 110], [798, 80], [804, 20]] },
  { x: 2096, area: [808, 831], poc: 821, to: 2280, rows: [[722, 8], [735, 38], [745, 22], [754, 86], [760, 35], [770, 52], [782, 28], [795, 68], [805, 25], [812, 60], [819, 120], [826, 125], [832, 45], [842, 78], [850, 22], [856, 5], [865, 15], [873, 50], [876, 84], [882, 60], [889, 110], [894, 165], [900, 105], [908, 35], [920, 55], [925, 75], [933, 50], [940, 115], [945, 82], [950, 42], [955, 12], [967, 3]] },
];

function buildProfiles() {
  const rnd = makeRandom(9);
  let cyan = "";
  let purple = "";
  let poc = box(967, 279, 25, 1);
  profiles.forEach((p) => {
    const last = p.rows[p.rows.length - 1][0];
    // price step of 0.00005 is a little under two pixels
    for (let y = p.rows[0][0]; y <= last; y += 1.87) {
      const row = Math.round(y);
      const w = Math.max(2, Math.round(lerp(p.rows, y) * (0.6 + rnd() * 0.55)));
      if (row >= p.area[0] && row <= p.area[1]) purple += box(p.x, row, w, 1);
      else cyan += box(p.x, row, w, 1);
    }
    if (p.to) poc += box(p.x, p.poc, p.to - p.x, 1);
  });
  return { cyan, purple, poc };
}
const profile = buildProfiles();

const rightLevels: Level[] = [
  [165, 39, 2, 33], [351, 78, 5, 45], [538, 57, 26, 4], [725, 42, 23, 22], [911, 49, 10, 1],
].map(([y, g, p, b]) => ({ y, g, p, b }));

const Ring = ({ x, y, r, c, o }: { x: number; y: number; r: number; c: string; o: number }) => (
  <g>
    <circle cx={x} cy={y} r={r} fill={c} fillOpacity={o} stroke={c} strokeWidth="2" />
    <rect x={x - 2} y={y - 2} width="4" height="4" fill={c} />
  </g>
);

const Triangle = ({ x, y, r, c, o, down }: { x: number; y: number; r: number; c: string; o: number; down?: boolean }) => (
  <path
    d={down ? `M${x} ${y + r}l${-r} ${-2 * r + 2}h${2 * r}z` : `M${x} ${y - r}l${-r} ${2 * r - 2}h${2 * r}z`}
    fill={c}
    fillOpacity={o}
    stroke={c}
  />
);

function IntradayPlot() {
  return (
    <Plot viewBox="967 92 1521 905" preserveAspectRatio="none">
      <path d={profile.purple} fill="#e6d8f8" />
      <path d={profile.cyan} fill="#80ffff" />
      <path d={profile.poc} fill="#8484f4" />
      <path d={box(967, 257, 393, 2) + box(1360, 774, 920, 2)} fill="#ff7c7c" />
      <path d={box(967, 603, 1521, 1) + box(967, 961, 1521, 1)} fill={ORANGE} />
      <path d="M967 405L1026 317" stroke="#f8b030" />
      <path d="M1143.500 92V980" stroke="#c8bcc0" strokeDasharray="5 2" />
      <path d={intraday.up} fill="#1f9a28" />
      <path d={intraday.down} fill="#dc1414" />
      <path d={intraday.o} fill="#ffa92c" />
      <path d={intraday.b} fill="#1c34e0" />
      <path d="M1702 543L1779 974" stroke="#c6bec0" strokeWidth="2" />
      <OptionBars x={2391} rows={rightLevels} />
      <path d={box(2390, 118, 1, 879)} fill="#cccccc" />
      <path d={box(2232, 348, 46, 2)} fill="#00a8ff" />
      <path d={box(2280, 872, 208, 1)} fill="#52b1f3" />
      <Ring x={1128} y={154} r={25} c="#ff0000" o={0.25} />
      <path d="M1128 135L1110 166H1147Z" fill={ORANGE} fillOpacity=".6" stroke={ORANGE} />
      <rect x="1125" y="151" width="5" height="5" fill="#ff8c00" />
      <Ring x={1072} y={290} r={17} c="#f00000" o={0.3} />
      <Ring x={1224} y={424} r={14} c="#32cd32" o={0.3} />
      <Triangle x={1291} y={448} r={11} c={ORANGE} o={0.6} />
      <rect x="1288" y="446" width="4" height="4" fill="#ff9000" />
      <Triangle x={1312} y={531} r={10} c="#e81020" o={0.7} />
      <Triangle x={1312} y={533} r={10} c="#e81020" o={0.3} down />
      <Triangle x={1620} y={515} r={10} c="#2030e0" o={0} down />
      <Triangle x={1678} y={637} r={10} c="#e81020" o={0.8} down />
      <Triangle x={1678} y={634} r={8} c="#e81020" o={0.4} down />
      <Triangle x={1713} y={711} r={10} c="#e02020" o={0.1} />
      <Ring x={1764} y={742} r={21} c="#32cd32" o={0.27} />
      <Triangle x={1808} y={765} r={10} c="#e02020" o={0.2} />
      <Triangle x={1808} y={768} r={10} c="#e02020" o={0.2} down />
      <Triangle x={1810} y={780} r={10} c="#e81020" o={0.5} />
      <Triangle x={1810} y={782} r={10} c="#e81020" o={0.9} down />
      <Triangle x={1891} y={757} r={10} c="#e02020" o={0} />
      <Ring x={2100} y={848} r={28} c="#ff0000" o={0.33} />
      <path d="M2100 819L2071 867H2129Z" fill={ORANGE} fillOpacity=".5" stroke={ORANGE} />
      <rect x="2097" y="845" width="5" height="5" fill="#ff9000" />
      <Ring x={2162} y={826} r={12} c="#f00000" o={0.33} />
      <path d="M1115 118L2423 918" stroke="#0a800a" strokeWidth="2" />
      <g fill="#fff" stroke="#0a800a">
        <circle cx="1115" cy="118" r="3" />
        <circle cx="1769" cy="518" r="3" />
        <circle cx="2423" cy="918" r="3" />
      </g>
      <rect x="967" y="92" width="99" height="99" fill="#fff" />
      <path d={box(1066, 92, 1, 100) + box(967, 191, 100, 1)} fill="#000" />
      <path d={box(1001, 92, 1, 99)} fill="#e00000" />
      <polyline points="983,98 1002,125 1013,137 1019,144 1035,158 1047,166 1052,168" fill="none" stroke="#1010f0" strokeWidth="2" />
      <path d={box(1479, 92, 1, 905)} fill="#0000a4" />
      <Label x="1072" y="106" $size={11}>HFT: Agr. / Range 25 / Interval 3000 / Min tick 14 / Total 280 / BidAsk / Delta58%</Label>
      <Label x="1072" y="118" $size={11}>HFT 2: Agr. / Range 25 / Interval 3000 / Auto / Min tick 21 / Total 252 / BidAsk / Delta58%</Label>
      <Label x="2485" y="103" textAnchor="end" $size={11}>Fut. Jun 22 Exp. 13/06/2022</Label>
      <Label x="2485" y="116" textAnchor="end" $size={11}>Opt. May 22 Exp. 06.05.2022</Label>
      <Label x="2318" y="597" $size={8} $fill={ORANGE}>0 gl</Label>
      <Label x="2318" y="954" $size={8} $fill={ORANGE}>1 gl</Label>
      <Label x="2392" y="982">PutVol  1629</Label>
      <Label x="2392" y="994">CallVol  2874</Label>
      <Label x="969" y="994">H: 0.8208  O: 0.82025  C: 0.82065  L: 0.8201  ATR = 197</Label>
    </Plot>
  );
}

const tvPeaks: Key3[] = [
  [975, 12, 1], [1009, 14, 0], [1013, 46, 1], [1015, 16, 0], [1055, 17, 1], [1063, 14, 1], [1071, 25, 0], [1077, 10, 1],
  [1101, 8, 1], [1117, 9, 0], [1125, 38, 1], [1127, 23, 0], [1139, 8, 1], [1195, 8, 1], [1197, 14, 1], [1207, 7, 0],
  [1213, 9, 0], [1223, 11, 1], [1239, 9, 1], [1255, 8, 1], [1289, 10, 0], [1291, 20, 1], [1295, 12, 1], [1299, 11, 0],
  [1303, 19, 1], [1317, 10, 0], [1375, 10, 1], [1381, 9, 1], [1439, 7, 1], [1477, 10, 0], [1511, 10, 1], [1525, 9, 1],
  [1559, 10, 1], [1565, 27, 0], [1621, 8, 1], [1671, 19, 0], [1673, 23, 0], [1677, 12, 1], [1697, 7, 0], [1749, 8, 0],
  [1763, 17, 1], [1765, 12, 1], [1801, 8, 0], [1857, 8, 0], [1863, 8, 1], [1887, 26, 1], [1889, 12, 1], [1893, 8, 1],
  [1933, 11, 1], [2015, 8, 0], [2033, 8, 1], [2099, 8, 0], [2115, 12, 0], [2117, 15, 0], [2211, 10, 0], [2217, 13, 0],
  [2223, 24, 1], [2229, 10, 1],
];

const cdPeaks: Key3[] = [
  [967, 17, 2], [975, 12, 2], [1013, 14, 2], [993, 9, 2], [1055, 5, 2], [1099, 10, 2], [1125, 18, 1], [1127, -8, 0],
  [1073, -7, 0], [1177, 12, 2], [1187, 7, 2], [1197, 9, 2], [1201, -14, 2], [1211, -9, 2], [1241, 15, 2],
  [1223, 6, 2], [1301, 7, 2], [1305, 18, 2], [1309, 12, 1], [1297, -9, 2], [1313, -14, 2], [1361, 14, 2],
  [1375, 9, 2], [1459, 5, 2], [1479, -7, 0], [1509, 13, 2], [1511, 13, 2], [1525, 13, 2], [1527, -5, 2],
  [1565, 6, 2], [1619, -8, 2], [1641, -5, 2], [1673, -18, 2], [1681, 6, 2], [1701, -12, 2], [1729, 25, 2],
  [1731, 14, 2], [1735, 22, 2], [1737, 7, 1], [1753, 11, 2], [1751, -11, 2], [1765, 8, 1], [1865, 7, 2],
  [1883, -9, 2], [1889, 5, 1], [1911, -8, 2], [1913, -20, 2], [1923, 7, 2], [2023, 8, 2], [2019, -6, 2],
  [2099, -7, 0], [2103, 5, 2], [2113, 7, 1], [2121, 12, 2], [2123, 11, 2], [2175, -5, 2], [2219, -10, 2],
  [2223, 18, 2], [2225, 25, 1], [2261, -16, 2],
];

const cd1: Pt[] = [
  [967, -9], [972, -9], [975, -5], [990, -4], [993, 1], [1003, -2], [1012, -6], [1014, 0], [1020, 5], [1035, 2],
  [1048, -1], [1055, 4], [1060, 9], [1070, 6], [1085, 11], [1098, 20], [1105, 22], [1115, 18], [1123, 22],
  [1125, 44], [1128, 33], [1134, 38], [1143, 50], [1155, 54], [1173, 54], [1175, 0], [1180, 2], [1190, 4],
  [1197, 16], [1205, 10], [1213, 2], [1225, 8], [1240, 8], [1250, 18], [1258, 28], [1275, 31], [1290, 28],
  [1296, 38], [1300, 30], [1306, 55], [1308, 60], [1315, 57], [1320, 50], [1327, 52], [1333, 41], [1342, 40],
  [1348, 46], [1357, 44], [1359, 0], [1361, 2], [1380, 2], [1386, -1], [1391, -3], [1405, -17], [1412, -17],
  [1420, -25], [1445, -25], [1455, -26], [1465, -32], [1475, -32], [1480, -53], [1487, -50], [1505, -56],
  [1514, -48], [1523, -53], [1530, -50], [1542, -52], [1544, 0], [1550, 0], [1585, -4], [1605, -2], [1620, -9],
  [1640, -5], [1660, -5], [1672, -15], [1690, -22], [1700, -26], [1715, -22], [1726, -23], [1728, 0], [1731, 8],
  [1736, 17], [1745, 15], [1755, 3], [1764, 6], [1775, 1], [1800, 1], [1810, -4], [1820, -2], [1840, -14],
  [1855, -22], [1865, -16], [1875, -20], [1888, -27], [1893, -22], [1909, -22], [1911, 0], [1914, -8],
  [1925, -5], [1930, 3], [1935, 5], [1960, 4], [1975, 1], [1990, -3], [2010, -6], [2020, -12], [2040, -17],
  [2060, -24], [2075, -22], [2085, -26], [2093, -26], [2096, -5], [2110, 0], [2115, 4], [2140, 2], [2155, -1],
  [2180, -9], [2195, -6], [2220, -5], [2222, 0], [2223, 30], [2230, 36], [2240, 36], [2255, 38], [2268, 44],
  [2279, 45],
];

const cd1Line: Pt[] = [
  [966, 1246], [971, 1238], [976, 1229], [989, 1229], [992, 1187], [1012, 1187], [1014, 1184], [1040, 1183],
  [1055, 1185], [1080, 1183], [1093, 1181], [1100, 1174], [1125, 1174], [1148, 1179], [1155, 1177], [1173, 1178],
  [1176, 1187], [1180, 1182], [1200, 1179], [1212, 1190], [1238, 1188], [1243, 1183], [1265, 1181], [1290, 1183],
  [1302, 1187], [1308, 1176], [1320, 1184], [1345, 1182], [1350, 1179], [1357, 1180], [1360, 1187], [1370, 1181],
  [1378, 1176], [1410, 1174], [1425, 1178], [1445, 1178], [1465, 1177], [1480, 1180], [1490, 1184], [1507, 1184],
  [1512, 1175], [1523, 1177], [1526, 1174], [1541, 1175], [1544, 1186], [1560, 1184], [1571, 1183], [1608, 1184],
  [1620, 1193], [1640, 1194], [1668, 1199], [1674, 1210], [1690, 1208], [1702, 1217], [1715, 1221], [1725, 1222],
  [1729, 1186], [1737, 1160], [1748, 1161], [1751, 1163], [1756, 1158], [1770, 1157], [1780, 1159], [1800, 1159],
  [1820, 1162], [1840, 1166], [1860, 1167], [1870, 1165], [1880, 1167], [1888, 1174], [1908, 1175], [1913, 1195],
  [1925, 1190], [1955, 1189], [1980, 1195], [2010, 1195], [2020, 1201], [2030, 1198], [2050, 1199], [2065, 1197],
  [2080, 1200], [2093, 1199], [2096, 1188], [2105, 1185], [2120, 1185], [2123, 1180], [2150, 1180], [2175, 1186],
  [2200, 1194], [2213, 1194], [2220, 1200], [2223, 1195], [2240, 1195], [2250, 1193], [2260, 1196], [2263, 1201],
  [2277, 1201],
];

function IntradayTv() {
  const rnd = makeRandom(31);
  const d = ["", ""];
  for (let x = 967; x < 2280; x += 2) {
    let h = 1 + Math.floor(rnd() * rnd() * 5);
    tvPeaks.forEach(([px, ph]) => {
      const gap = Math.abs(px - x);
      if (gap > 0 && gap < 12) h = Math.max(h, Math.round(Math.min(7, ph / 3) * (1 - gap / 12) * (0.5 + rnd())));
    });
    d[rnd() > 0.45 ? 1 : 0] += box(x, 1069 - h, 1, h);
  }
  tvPeaks.forEach(([x, h, c]) => {
    d[c] += box(x, 1069 - h, 1, h);
  });
  return (
    <Plot viewBox="966 1023 1589 46" preserveAspectRatio="none">
      <path d={d[1]} fill="#32cd32" />
      <path d={d[0]} fill="#f01414" />
      <path d={box(1478, 1023, 1, 46)} fill="#0000a4" />
      <Label x="971" y="1037" $fill="#2a1cff">TV</Label>
    </Plot>
  );
}

function IntradayCd() {
  const rnd = makeRandom(57);
  const d = ["", "", box(967, 1098, 1312, 1)];
  const bar = (x: number, v: number) => box(x, v > 0 ? 1098 - v : 1098, 1, Math.abs(v));
  for (let x = 967; x < 2280; x += 2) {
    const amp = 1 + rnd() * rnd() * rnd() * 6;
    const v = Math.round((rnd() > 0.5 ? 1 : -1) * amp);
    const roll = rnd();
    d[roll < 0.55 ? 2 : v > 0 ? 1 : 0] += bar(x, v || 1);
  }
  cdPeaks.forEach(([x, v, c]) => {
    d[c] += bar(x, v);
  });
  return (
    <Plot viewBox="966 1073 1589 50" preserveAspectRatio="none">
      <path d={box(966, 1073, 1, 50)} fill="#cfcfcf" />
      <path d={d[2]} fill="#1818d0" />
      <path d={d[1]} fill="#32cd32" />
      <path d={d[0]} fill="#f01414" />
      <path d={box(1478, 1073, 1, 50)} fill="#0000a4" />
      <Label x="971" y="1087" $fill="#2a1cff">CD</Label>
    </Plot>
  );
}

function IntradayCd1() {
  let up = "";
  let down = "";
  for (let x = 967; x < 2280; x += 2) {
    const v = Math.round(lerp(cd1, x));
    if (v > 0) up += box(x, 1187 - v, 1, v);
    if (v < 0) down += box(x, 1187, 1, -v);
  }
  return (
    <Plot viewBox="966 1127 1589 120" preserveAspectRatio="none">
      <path d={up} fill="#32cd32" />
      <path d={down} fill="#f40c0c" />
      <polyline points={poly(cd1Line)} fill="none" stroke="#2424d4" strokeWidth="2" />
      <path d={box(1478, 1127, 1, 120)} fill="#0000a4" />
      <Label x="971" y="1141" $fill="#2a1cff">CD 1</Label>
    </Plot>
  );
}

function IntradayOi() {
  return (
    <Plot viewBox="966 1251 1589 113" preserveAspectRatio="none">
      <Stepped
        color="#94868a"
        halo="#c4b8ba"
        end={2278}
        pts={[[966, 1347], [990, 1361], [1174, 1329], [1303, 1336], [1358, 1253], [1541, 1362], [1725, 1320], [1909, 1315], [2093, 1321]]}
      />
      <Stepped color="#0000ff" halo="#6060ff" end={2197} pts={[[966, 1354], [1368, 1266], [1551, 1261]]} />
      <Stepped
        color="#f40000"
        halo="#ff6c6c"
        end={2193}
        pts={[[966, 1358], [1363, 1275], [1547, 1277], [1732, 1257], [1915, 1271], [2099, 1274]]}
      />
      <path d={box(1478, 1251, 2, 113)} fill="#8484dc" />
      <Label x="971" y="1265" $fill="#2a1cff">OI</Label>
    </Plot>
  );
}

/* ------------------------------------------------------------------ */
/* window chrome                                                       */
/* ------------------------------------------------------------------ */

const menu = ["Windows", "Settings", "Volumes", "Indicators", "User"];
const frames = ["Tick", "M1", "M5", "M15", "M30", "H1", "H4", "D", "W"];
const tools = ["Draw", "Crosshair", "Vertical scale", "Free scale", "Zoom", "Delta bars", "Profile", "Shift right"];

interface ChromeProps {
  id: string;
  inset?: boolean;
  active: string;
  children: React.ReactNode;
}

function Terminal({ id, inset, active, children }: ChromeProps) {
  return (
    <Frame $inset={inset}>
      <TitleBar $inset={inset}>
        <Logo />
        <Title>Trading Volume Terminal</Title>
        <WinButtons>
          <WinButton aria-label="Minimize">
            <svg width="12" height="12"><path d="M2 8h8v2h-8z" fill="#111" /></svg>
          </WinButton>
          <WinButton aria-label="Maximize">
            <svg width="12" height="12"><path d="M2 2h8v8h-8zM3 5v4h6v-4z" fill="#111" fillRule="evenodd" /></svg>
          </WinButton>
          <WinButton aria-label="Close">
            <svg width="12" height="12"><path d="M2 2l8 8M10 2l-8 8" stroke="#111" strokeWidth="1.500" /></svg>
          </WinButton>
        </WinButtons>
      </TitleBar>
      <MenuBar $inset={inset}>
        {menu.map((m) => (
          <MenuItem key={m}>{m}</MenuItem>
        ))}
        <Refresh aria-label="Refresh"><RefreshIcon /></Refresh>
      </MenuBar>
      <Toolbar $inset={inset}>
        <Group $gap={3} $after={7}>
          <Caption htmlFor={`${id}-symbol`}>Symbol</Caption>
          <Combo $w={82}>
            <Pick id={`${id}-symbol`} $size={15}><option>6J</option></Pick>
            <Chevron />
          </Combo>
        </Group>
        <Group $gap={6} $after={4}>
          <Caption htmlFor={`${id}-contract`}>Contract</Caption>
          <Combo $w={76}>
            <Pick id={`${id}-contract`} $size={13}><option>AUTO</option></Pick>
            <Caret />
          </Combo>
        </Group>
        <Group $after={3}>
          {frames.map((f, i) => (
            <ToolButton key={f} $w={28} $on={f === active} $join={i > 0}>{f}</ToolButton>
          ))}
        </Group>
        <Group $after={inset ? 3 : 0}>
          <Combo $w={inset ? 94 : 67}>
            <SelectedPick aria-label="Chart type"><option>Candle</option></SelectedPick>
            {inset && <Chevron />}
          </Combo>
        </Group>
        {inset && (
          <Group $gap={2} $after={3}>
            <Combo $w={87}>
              <DateBox aria-label="From date" defaultValue="2/  1/2022" />
              <Chevron />
            </Combo>
            <Combo $w={87}>
              <DateBox aria-label="To date" defaultValue="4/10/2022" />
              <Chevron />
            </Combo>
          </Group>
        )}
        <Group $gap={1}>
          <ToolButton $w={28} aria-label="Star signal"><Icon name="Star signal" /></ToolButton>
          <HftButton $w={28}>HFT</HftButton>
          {tools.map((t) => (
            <ToolButton key={t} aria-label={t} $on={t === "Vertical scale"}><Icon name={t} /></ToolButton>
          ))}
        </Group>
        <Load>Load</Load>
      </Toolbar>
      {children}
    </Frame>
  );
}

/* ------------------------------------------------------------------ */
/* page                                                                */
/* ------------------------------------------------------------------ */

const leftTicks: [string, number][] = [
  "0.885", "0.88", "0.87", "0.865", "0.855", "0.85", "0.845", "0.84", "0.835", "0.83", "0.825", "0.82", "0.815", "0.81",
].map((t) => [t, 118 + (0.885 - Number(t)) * 9200]);
const leftTags: [string, number][] = [
  "0.88685", "0.87485", "0.8709", "0.8643", "0.86065", "0.84375", "0.8259", "0.80075",
].map((t) => [t, 120 + (0.885 - Number(t)) * 9200]);

const rightTicks: [string, number][] = [
  "0.826", "0.824", "0.822", "0.82", "0.818", "0.816", "0.814", "0.812", "0.81", "0.808", "0.804",
].map((t) => [t, 123 + (0.826 - Number(t)) * 37300]);
const rightTags: [string, number][] = ["0.8132", "0.8036"].map((t) => [t, 126 + (0.826 - Number(t)) * 37300]);

const legend: [number, string][] = [
  [1059, "#0000ff"], [1255, "#20f020"], [1297, "#20f020"], [1340, "#20f020"], [1389, ORANGE],
  [1618, ORANGE], [1658, "#f00000"], [1699, "#0000e0"], [2122, "#0000e0"], [2383, ORANGE],
];

export default function App() {
  return (
    <>
      <Global />
      <Desktop>
        <Terminal id="daily" active="D">
          <Body $rows="836fr 22px 4px 71fr 4px 54fr 4px 98fr 4px 184fr 3px">
            <ChartRow>
              <DailyPlot />
              <PriceAxis top={86} height={836} ticks={leftTicks} tags={leftTags} live={846} />
            </ChartRow>
            <DateAxis $start={0}>
              <DateCell $w={85}><DateScrolled>13.12</DateScrolled></DateCell>
              {["03.01", "26.01", "18.02", "15.03"].map((d) => (
                <DateCell key={d} $w={102}><Paren>(</Paren><DateBoxed>{d}</DateBoxed></DateCell>
              ))}
              <DateCell $w={102}><DateBoxed>07.04</DateBoxed></DateCell>
              <Cursor $left={442} $w={60}>23.03.22</Cursor>
              <Cursor $left={412} $w={61}>22.03.22</Cursor>
            </DateAxis>
            <Grip at="49%" />
            <DailyOi />
            <Grip at="49%" />
            <DailyTv />
            <Grip at="49%" />
            <DailyCd />
            <Grip at="49%" />
            <CotReports />
            <Strip>
              <Pager aria-label="Previous" />
              <Pager aria-label="Next" />
              <Thumb $left="57%" $w={37} $top={1} />
            </Strip>
          </Body>
        </Terminal>
        <Terminal id="intraday" inset active="M15">
          <Body $inset $rows="905fr 22px 4px 46fr 4px 50fr 4px 120fr 4px 113fr 6px">
            <ChartRow>
              <IntradayPlot />
              <PriceAxis top={92} height={905} ticks={rightTicks} tags={rightTags} live={872} />
            </ChartRow>
            <DateAxis $start={5}>
              {["31.03", "01.04", "04.04", "05.04", "06.04", "07.04", "08.04"].map((d) => (
                <DateCell key={d} $w={184}><DateBoxed>{d}</DateBoxed>08:00</DateCell>
              ))}
              <Cursor $navy $left={492} $w={40}>15:45</Cursor>
            </DateAxis>
            <Grip at="49%" />
            <IntradayTv />
            <Grip at="49%" />
            <IntradayCd />
            <Grip at="49%" />
            <IntradayCd1 />
            <Grip at="49%" />
            <IntradayOi />
            <Strip>
              <Pager aria-label="Previous">
                <svg width="14" height="8"><path d="M7 0l-6 6h12z" fill="#2090e0" /></svg>
              </Pager>
              <Pager aria-label="Next">
                <svg width="14" height="8"><path d="M7 0l-6 6h12z" fill="#2090e0" /></svg>
              </Pager>
              <Thumb $left="39%" $w={27} />
              {legend.map(([x, c]) => (
                <Thumb key={x} $left={`${((x - 966) / 1589) * 100}%`} $w={10} $c={c} $top={5} />
              ))}
            </Strip>
          </Body>
        </Terminal>
      </Desktop>
    </>
  );
}
